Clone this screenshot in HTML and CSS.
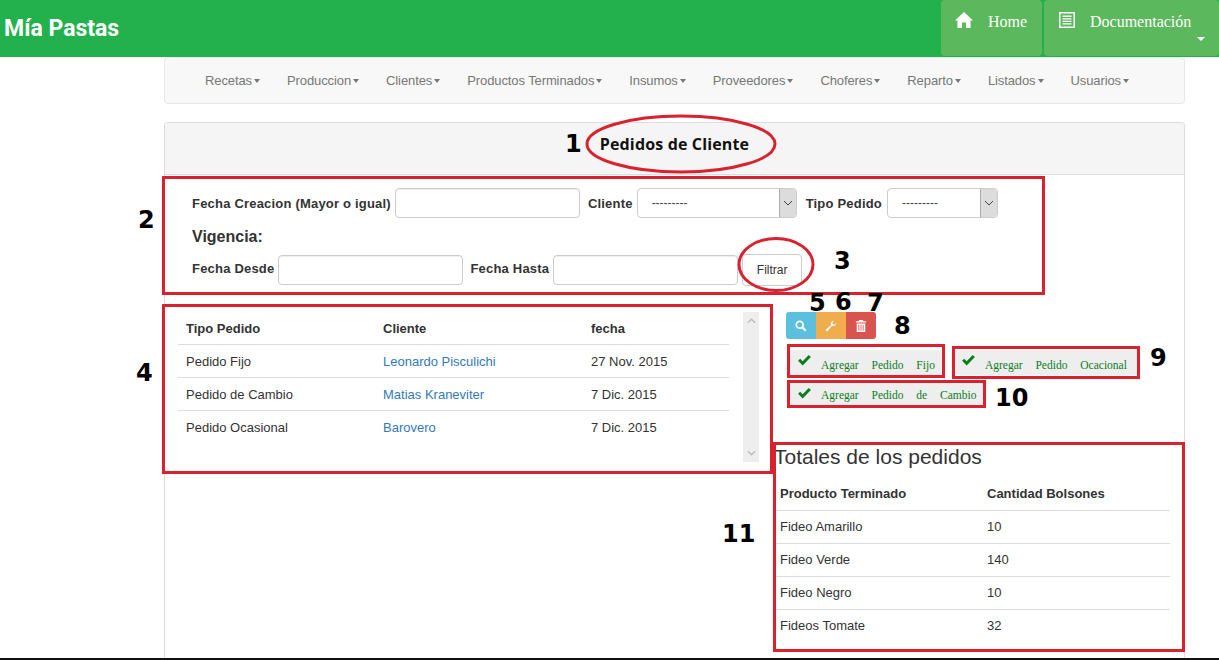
FILE: index.html
```html
<!DOCTYPE html>
<html lang="es">
<head>
<meta charset="utf-8">
<title>Mía Pastas</title>
<link rel="stylesheet" href="styles.css">
</head>
<body>
<div class="page">
  <header class="topbar">
    <a class="brand">Mía Pastas</a>
    <nav class="topnav">
      <a class="topbtn home">
        <svg class="ticon" viewBox="0 0 18 16"><path fill="#fff" d="M9 0 L18 8.400 L15.600 8.400 L15.600 16 L11 16 L11 10.500 L7 10.500 L7 16 L2.400 16 L2.400 8.400 L0 8.400 Z"/></svg>
        <span>Home</span>
      </a>
      <a class="topbtn docs">
        <svg class="ticon doc" viewBox="0 0 16 16"><path fill="#fff" fill-rule="evenodd" d="M0 0H16V16H0Z M1.500 1.500V14.500H14.500V1.500Z M3.500 3.500H12.500V5H3.500Z M3.500 6.300H12.500V7.500H3.500Z M3.500 8.800H12.500V10H3.500Z M3.500 11.300H12.500V12.500H3.500Z"/></svg>
        <span>Documentación</span>
        <i class="caret-white"></i>
      </a>
    </nav>
  </header>

  <div class="main">
    <nav class="menu">
      <a class="menu-item">Recetas<i class="caret"></i></a>
      <a class="menu-item">Produccion<i class="caret"></i></a>
      <a class="menu-item">Clientes<i class="caret"></i></a>
      <a class="menu-item">Productos Terminados<i class="caret"></i></a>
      <a class="menu-item">Insumos<i class="caret"></i></a>
      <a class="menu-item">Proveedores<i class="caret"></i></a>
      <a class="menu-item">Choferes<i class="caret"></i></a>
      <a class="menu-item">Reparto<i class="caret"></i></a>
      <a class="menu-item">Listados<i class="caret"></i></a>
      <a class="menu-item">Usuarios<i class="caret"></i></a>
    </nav>

    <section class="panel">
      <div class="panel-heading"><h1>Pedidos de Cliente</h1></div>
      <form class="filters">
        <div class="frow">
          <label>Fecha Creacion (Mayor o igual)</label>
          <input class="field" type="text">
          <label class="l-cliente">Cliente</label>
          <div class="select s-cliente"><span>---------</span><b class="sarrow"><svg viewBox="0 0 10 6"><path d="M1 1 L5 5 L9 1" fill="none" stroke="#444" stroke-width="1"/></svg></b></div>
          <label class="l-tipo">Tipo Pedido</label>
          <div class="select s-tipo"><span>---------</span><b class="sarrow"><svg viewBox="0 0 10 6"><path d="M1 1 L5 5 L9 1" fill="none" stroke="#444" stroke-width="1"/></svg></b></div>
        </div>
        <h4 class="vigencia">Vigencia:</h4>
        <div class="frow frow-b">
          <label>Fecha Desde</label>
          <input class="field" type="text">
          <label class="l-hasta">Fecha Hasta</label>
          <input class="field" type="text">
          <button class="filter-btn" type="button">Filtrar</button>
        </div>
      </form>

      <div class="content">
        <div class="list">
          <table class="tbl orders">
            <thead><tr><th>Tipo Pedido</th><th>Cliente</th><th>fecha</th></tr></thead>
            <tbody>
              <tr><td>Pedido Fijo</td><td><a>Leonardo Pisculichi</a></td><td>27 Nov. 2015</td></tr>
              <tr><td>Pedido de Cambio</td><td><a>Matias Kraneviter</a></td><td>7 Dic. 2015</td></tr>
              <tr><td>Pedido Ocasional</td><td><a>Barovero</a></td><td>7 Dic. 2015</td></tr>
            </tbody>
          </table>
          <div class="scrollbar">
            <svg viewBox="0 0 10 6"><path d="M1 5 L5 1 L9 5" fill="none" stroke="#bbb" stroke-width="1.500"/></svg>
            <svg viewBox="0 0 10 6"><path d="M1 1 L5 5 L9 1" fill="none" stroke="#bbb" stroke-width="1.500"/></svg>
          </div>
        </div>

        <aside class="side">
          <div class="btn-group">
            <button class="ibtn info" type="button"><svg viewBox="0 0 14 14"><circle cx="5.500" cy="5.500" r="4" fill="none" stroke="#fff" stroke-width="2"/><path d="M8.500 8.500 L12.500 12.500" stroke="#fff" stroke-width="2.400"/></svg></button>
            <button class="ibtn warn" type="button"><svg viewBox="0 0 14 14"><path fill="#fff" d="M13.300 3.400 A4 4 0 0 1 8 6.800 L3.200 12.800 A1.500 1.500 0 0 1 1.100 10.700 L7 6 A4 4 0 0 1 10.600 .7 L8.600 3 L9.200 4.800 L11 5.400 Z"/></svg></button>
            <button class="ibtn danger" type="button"><svg viewBox="0 0 14 14"><path fill="#fff" fill-rule="evenodd" d="M5 0H9L10 1.500H13V3H1V1.500H4Z M2 4H12V14H2Z M4 5.500V12.500H5V5.500Z M6.500 5.500V12.500H7.500V5.500Z M9 5.500V12.500H10V5.500Z"/></svg></button>
          </div>
          <div class="adds">
            <a class="add a-fijo"><svg viewBox="0 0 14 12"><path fill="#0a7d1e" d="M0 6.300 L2.300 4 L5 6.700 L11.600 0 L14 2.300 L5 11.500 Z"/></svg><span>Agregar Pedido Fijo</span></a>
            <a class="add a-oca"><svg viewBox="0 0 14 12"><path fill="#0a7d1e" d="M0 6.300 L2.300 4 L5 6.700 L11.600 0 L14 2.300 L5 11.500 Z"/></svg><span>Agregar Pedido Ocacional</span></a>
            <a class="add a-cam"><svg viewBox="0 0 14 12"><path fill="#0a7d1e" d="M0 6.300 L2.300 4 L5 6.700 L11.600 0 L14 2.300 L5 11.500 Z"/></svg><span>Agregar Pedido de Cambio</span></a>
          </div>
          <h3 class="tot-title">Totales de los pedidos</h3>
          <table class="tbl totals">
            <thead><tr><th>Producto Terminado</th><th>Cantidad Bolsones</th></tr></thead>
            <tbody>
              <tr><td>Fideo Amarillo</td><td>10</td></tr>
              <tr><td>Fideo Verde</td><td>140</td></tr>
              <tr><td>Fideo Negro</td><td>10</td></tr>
              <tr><td>Fideos Tomate</td><td>32</td></tr>
            </tbody>
          </table>
        </aside>
      </div>
    </section>
  </div>

  <div class="notes">
    <svg class="rings" viewBox="0 0 1219 660">
      <ellipse cx="681" cy="144" rx="94" ry="28" fill="none" stroke="#d8222f" stroke-width="3"/>
      <ellipse cx="776" cy="264.500" rx="37" ry="26" fill="none" stroke="#d8222f" stroke-width="3"/>
    </svg>
    <div class="box b2"></div>
    <div class="box b4"></div>
    <div class="box b8"></div>
    <div class="box b9"></div>
    <div class="box b10"></div>
    <div class="box b11"></div>
    <span class="num n1">1</span>
    <span class="num n2">2</span>
    <span class="num n3">3</span>
    <span class="num n4">4</span>
    <span class="num n5">5</span>
    <span class="num n6">6</span>
    <span class="num n7">7</span>
    <span class="num n8">8</span>
    <span class="num n9">9</span>
    <span class="num n10">10</span>
    <span class="num n11">11</span>
  </div>
</div>
</body>
</html>
```
FILE: styles.css
```css
* { box-sizing: border-box; }
html, body { margin: 0; height: 100%; }
body { font-family: "Liberation Sans", Arial, sans-serif; font-size: 13px; color: #333; background: #fff; overflow: hidden; }
.page { position: relative; height: 660px; display: flex; flex-direction: column; border-bottom: 2px solid #111; overflow: hidden; }

.topbar { flex: none; height: 57px; background: #22b14c; display: flex; justify-content: space-between; }
.brand { font-family: "Roboto", "Liberation Sans", sans-serif; font-weight: 700; font-size: 23px; color: #fff; padding: 16px 0 0 4px; line-height: 26px; }
.topnav { display: flex; gap: 2px; }
.topbtn { position: relative; height: 56px; background: #5cb85c; border-radius: 4px; color: #fff; font-family: "Liberation Serif", serif; font-size: 16px; line-height: 20px; display: flex; align-items: flex-start; padding-top: 12px; }
.home { width: 101px; padding-left: 14px; gap: 15px; }
.docs { width: 175px; padding-left: 15px; gap: 15px; }
.ticon { width: 18px; height: 16px; flex: none; }
.ticon.doc { width: 16px; }
.caret-white { position: absolute; left: 153px; top: 37px; border-top: 4px solid #fff; border-left: 4px solid transparent; border-right: 4px solid transparent; }

.main { flex: 1; min-height: 0; display: flex; flex-direction: column; margin-left: 164px; width: 1021px; }
.menu { flex: none; height: 47px; background: #f8f8f8; border: 1px solid #e7e7e7; border-radius: 4px; display: flex; align-items: center; gap: 27px; padding-left: 40px; color: #777; }
.menu-item { display: flex; align-items: center; font-size: 13px; letter-spacing: -.1px; white-space: nowrap; }
.caret { margin-left: 2px; border-top: 4px solid #777; border-left: 3.500px solid transparent; border-right: 3.500px solid transparent; }

.panel { flex: 1; min-height: 0; margin-top: 18px; border: 1px solid #ddd; border-bottom: 0; border-radius: 4px 4px 0 0; }
.panel-heading { height: 52px; background: #f5f5f5; border-bottom: 1px solid #ddd; border-radius: 3px 3px 0 0; display: flex; justify-content: center; padding: 9px 0 0 0; }
.panel-heading h1 { margin: 0; font-family: "Open Sans", sans-serif; font-size: 16px; line-height: 24px; font-weight: 700; letter-spacing: .15px; color: #111; }

.filters { padding: 13px 0 0 27px; }
.frow { display: flex; align-items: center; height: 30px; }
.frow label { font-weight: 700; font-size: 13px; letter-spacing: .2px; color: #333; margin-right: 4px; white-space: nowrap; }
.frow-b label { margin-bottom: 3px; }
.field { width: 185px; height: 30px; border: 1px solid #ccc; border-radius: 4px; box-shadow: inset 0 1px 1px rgba(0,0,0,.075); background: #fff; }
.l-cliente { margin-left: 8px; }
.frow .l-tipo { margin-left: 9px; margin-right: 5px; }
.frow .l-hasta { margin-left: 7px; }
.select { height: 30px; border: 1px solid #ccc; border-radius: 4px; display: flex; justify-content: space-between; font-size: 12px; color: #444; overflow: hidden; }
.select span { padding: 7px 0 0 14px; }
.s-cliente { width: 160px; }
.s-tipo { width: 111px; }
.sarrow { width: 17px; background: #dcdcdc; border-left: 1px solid #aaa; display: flex; align-items: center; justify-content: center; }
.sarrow svg { width: 10px; height: 6px; }
.vigencia { margin: 0; height: 37px; padding-top: 9px; font-size: 16px; line-height: 20px; font-weight: 700; color: #333; }
.filter-btn { width: 60px; height: 32px; margin: -1px 0 0 4px; background: #fff; border: 1px solid #ccc; border-radius: 4px; font: 12px "Liberation Sans", sans-serif; color: #333; }

.content { display: flex; margin-top: 27px; }
.list { flex: none; display: flex; align-items: flex-start; margin-left: 13px; width: 581px; justify-content: space-between; }
.tbl { border-collapse: collapse; font-size: 13px; }
.tbl th { text-align: left; font-weight: 700; }
.tbl th, .tbl td { height: 33px; padding: 0 8px; border-bottom: 1px solid #ddd; }
.tbl tbody tr:last-child td { border-bottom: 0; }
.orders { width: 551px; table-layout: fixed; }
.orders th { height: 32px; }
.orders th, .orders td { padding-top: 2px; }
.orders th:nth-child(1) { width: 197px; }
.orders th:nth-child(2) { width: 208px; }
.orders a { color: #337ab7; }
.scrollbar { width: 16px; height: 150px; background: #eee; display: flex; flex-direction: column; justify-content: space-between; align-items: center; padding: 6px 0; }
.scrollbar svg { width: 9px; height: 6px; }

.side { width: 397px; margin-left: 14px; }
.btn-group { display: flex; margin-left: -1px; padding-left: 14px; }
.ibtn { width: 30px; height: 27px; border: 0; padding: 0; display: flex; align-items: center; justify-content: center; }
.ibtn svg { width: 12px; height: 12px; }
.info { background: #5bc0de; border-radius: 3px 0 0 3px; }
.warn { background: #f0ad4e; }
.danger { background: #d9534f; border-radius: 0 3px 3px 0; }
.adds { display: flex; flex-wrap: wrap; margin-top: 11px; padding-left: 17px; height: 58px; align-content: flex-start; }
.add { height: 25px; background: #eee; display: flex; align-items: center; color: #0a7d1e; font-family: "Liberation Serif", serif; font-size: 11.500px; word-spacing: 10px; padding: 0 6px 0 8px; gap: 10px; }
.add svg { width: 13px; height: 11px; margin-top: -4px; }
.add span { margin-top: 5px; }
.a-oca { margin-left: 13px; padding-right: 10px; }
.a-cam { height: 22px; margin-top: 8px; }
.a-cam svg { margin-top: -2px; }
.a-cam span { margin-top: 1px; }
.tot-title { margin: 37px 0 0 1px; height: 24px; font-size: 21px; line-height: 23px; font-weight: 400; color: #333; }
.totals { width: 397px; table-layout: fixed; margin-top: 8px; }
.totals th { font-size: 13px; }
.totals th, .totals td { padding-left: 7px; }
.totals th:nth-child(1) { width: 207px; }

.notes { position: absolute; inset: 0; pointer-events: none; }
.rings { position: absolute; left: 0; top: 0; width: 1219px; height: 660px; }
.box { position: absolute; border: 3px solid #d8222f; }
.b2 { left: 162px; top: 176px; width: 883px; height: 119px; }
.b4 { left: 162px; top: 304px; width: 611px; height: 170px; }
.b8 { left: 787px; top: 344px; width: 158px; height: 34px; }
.b9 { left: 952px; top: 346px; width: 188px; height: 33px; }
.b10 { left: 787px; top: 380px; width: 199px; height: 28px; }
.b11 { left: 773px; top: 442px; width: 412px; height: 210px; }
.num { position: absolute; font-family: "DejaVu Sans", sans-serif; font-weight: 700; font-size: 24px; line-height: 28px; color: #000; }
.n1 { left: 565px; top: 130px; }
.n2 { left: 138px; top: 206px; }
.n3 { left: 834px; top: 247px; }
.n4 { left: 136px; top: 359px; }
.n5 { left: 809px; top: 289px; }
.n6 { left: 835px; top: 288px; }
.n7 { left: 867px; top: 289px; }
.n8 { left: 894px; top: 312px; }
.n9 { left: 1150px; top: 344px; }
.n10 { left: 995px; top: 384px; }
.n11 { left: 722px; top: 520px; }
```
